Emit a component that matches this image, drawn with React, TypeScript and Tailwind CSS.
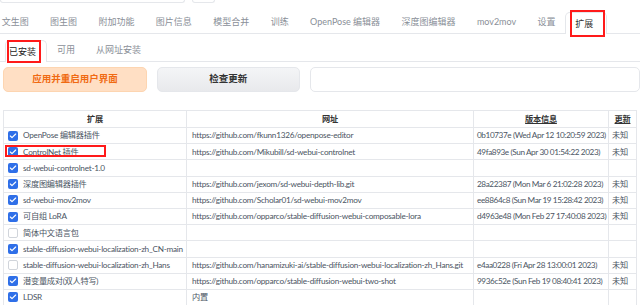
import { Check } from "lucide-react";

const font = "font-['Lato','Noto_Sans_CJK_SC',sans-serif]";

const tabs = [
  "文生图",
  "图生图",
  "附加功能",
  "图片信息",
  "模型合并",
  "训练",
  "OpenPose 编辑器",
  "深度图编辑器",
  "mov2mov",
  "设置",
];

type Row = {
  name: string;
  url: string;
  version: string;
  update: string;
  checked: boolean;
};

const rows: Row[] = [
  {
    name: "OpenPose 编辑器插件",
    url: "https://github.com/fkunn1326/openpose-editor",
    version: "0b10737e (Wed Apr 12 10:20:59 2023)",
    update: "未知",
    checked: true,
  },
  {
    name: "ControlNet 插件",
    url: "https://github.com/Mikubill/sd-webui-controlnet",
    version: "49fa893e (Sun Apr 30 01:54:22 2023)",
    update: "未知",
    checked: true,
  },
  { name: "sd-webui-controlnet-1.0", url: "", version: "", update: "", checked: true },
  {
    name: "深度图编辑器插件",
    url: "https://github.com/jexom/sd-webui-depth-lib.git",
    version: "28a22387 (Mon Mar 6 21:02:28 2023)",
    update: "未知",
    checked: true,
  },
  {
    name: "sd-webui-mov2mov",
    url: "https://github.com/Scholar01/sd-webui-mov2mov",
    version: "ee8864c8 (Sun Mar 19 15:28:42 2023)",
    update: "未知",
    checked: true,
  },
  {
    name: "可自组 LoRA",
    url: "https://github.com/opparco/stable-diffusion-webui-composable-lora",
    version: "d4963e48 (Mon Feb 27 17:40:08 2023)",
    update: "未知",
    checked: true,
  },
  { name: "简体中文语言包", url: "", version: "", update: "", checked: false },
  {
    name: "stable-diffusion-webui-localization-zh_CN-main",
    url: "",
    version: "",
    update: "",
    checked: true,
  },
  {
    name: "stable-diffusion-webui-localization-zh_Hans",
    url: "https://github.com/hanamizuki-ai/stable-diffusion-webui-localization-zh_Hans.git",
    version: "e4aa0228 (Fri Apr 28 13:00:01 2023)",
    update: "未知",
    checked: false,
  },
  {
    name: "潜变量成对(双人特写)",
    url: "https://github.com/opparco/stable-diffusion-webui-two-shot",
    version: "9936c52e (Sun Feb 19 08:40:41 2023)",
    update: "未知",
    checked: true,
  },
  { name: "LDSR", url: "内置", version: "", update: "", checked: true },
];

const Box = ({ checked }: { checked: boolean }) =>
  checked ? (
    <span className="w-[10px] h-[10px] rounded-[2px] bg-[#2f6fe8] flex items-center justify-center shrink-0">
      <Check size={8} strokeWidth={3.5} color="white" />
    </span>
  ) : (
    <span className="w-[10px] h-[10px] rounded-[2px] border border-[#d1d5db] bg-white shrink-0" />
  );

export default function App() {
  return (
    <div className={`w-[640px] h-[305px] overflow-hidden bg-white ${font}`}>
      {/* leftovers of the row above */}
      <div className="h-[3px] flex gap-[7px]">
        <div className="w-[185px] h-[3px] border-x border-b border-[#e5e7eb] rounded-b-[4px]" />
        <div className="w-[23px] h-[3px] border-x border-b border-[#e5e7eb] rounded-b-[4px]" />
      </div>

      {/* main tabs */}
      <div className="h-[31px] flex items-end border-b border-[#e5e7eb] text-[9px] text-[#8a8f98] whitespace-nowrap">
        <div className="flex ml-[-9px]">
          {tabs.map((t) => (
            <div key={t} className="h-[22px] px-[10.7px] flex items-center">
              {t}
            </div>
          ))}
        </div>
        <div className="relative h-[22px] mb-[-1px] ml-[-1px] pl-[9px] pr-[13px] flex items-center bg-white border border-b-0 border-[#e5e7eb] rounded-t-[5px] text-[#333]">
          扩展
          <div className="absolute left-[4px] top-[-3px] w-[35px] h-[27px] border-2 border-[#ff1a1a]" />
        </div>
      </div>

      {/* sub tabs */}
      <div className="h-[28px] flex items-end border-b border-[#e5e7eb] text-[9px] text-[#8a8f98] whitespace-nowrap">
        <div className="relative h-[22px] mb-[-1px] ml-[5px] pl-[3px] pr-[10px] flex items-center bg-white border border-b-0 border-[#e5e7eb] rounded-t-[5px] text-[#222]">
          已安装
          <div className="absolute left-[1px] top-[-1px] w-[34px] h-[23px] border-2 border-[#ff1a1a]" />
        </div>
        <div className="h-[22px] pl-[10px] flex items-center">可用</div>
        <div className="h-[22px] pl-[21px] flex items-center">从网址安装</div>
      </div>

      {/* buttons */}
      <div className="mt-[5px] h-[25px] flex gap-[10px] pl-[3px] text-[9.5px] font-bold">
        <button className="w-[148px] h-full rounded-[5px] bg-[#ffdfc4] border border-[#fdd5b1] text-[#f06a12]">
          应用并重启用户界面
        </button>
        <button className="w-[147px] h-full rounded-[5px] bg-gradient-to-b from-[#f4f5f7] to-[#e8e9ec] border border-[#e5e7eb] text-[#333]">
          检查更新
        </button>
        <div className="w-[340px] h-full rounded-[5px] border border-[#e5e7eb] bg-white" />
      </div>

      {/* extensions table */}
      <table className="mt-[18px] ml-[3px] w-[633px] table-fixed border-collapse text-[8.2px] tracking-[-0.25px] text-[#4b5563]">
        <colgroup>
          <col className="w-[183px]" />
          <col className="w-[287px]" />
          <col className="w-[135px]" />
          <col className="w-[28px]" />
        </colgroup>
        <thead>
          <tr className="h-[17px] font-bold text-[#333]">
            <th className="border border-[#e5e7eb]">扩展</th>
            <th className="border border-[#e5e7eb]">网址</th>
            <th className="border border-[#e5e7eb]">
              <span className="underline">版本信息</span>
            </th>
            <th className="border border-[#e5e7eb]">
              <span className="underline">更新</span>
            </th>
          </tr>
        </thead>
        <tbody>
          {rows.map((r, i) => (
            <tr key={r.name} className="h-[16.2px]">
              <td className="border border-[#e5e7eb] pl-[4px] whitespace-nowrap">
                <div className="relative flex items-center gap-[5px]">
                  <Box checked={r.checked} />
                  <span>{r.name}</span>
                  {i === 1 && (
                    <div className="absolute left-[-3px] top-[-1px] w-[101px] h-[12px] border-2 border-[#ff1a1a]" />
                  )}
                </div>
              </td>
              <td className="border border-[#e5e7eb] pl-[5px] whitespace-nowrap overflow-hidden">
                {r.url}
              </td>
              <td className="border border-[#e5e7eb] pl-[3px] whitespace-nowrap overflow-hidden tracking-[-0.4px]">
                {r.version}
              </td>
              <td className="border border-[#e5e7eb] pl-[3px] whitespace-nowrap">
                {r.update}
              </td>
            </tr>
          ))}
        </tbody>
      </table>
    </div>
  );
}
